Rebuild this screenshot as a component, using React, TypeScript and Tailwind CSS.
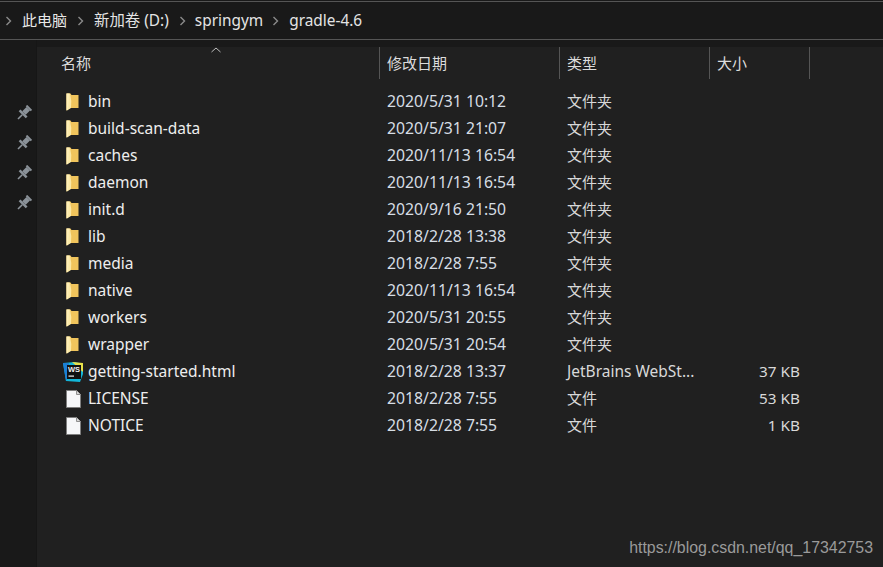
const rows = [
  { name: 'bin', date: '2020/5/31 10:12', type: '文件夹', size: '', icon: 'folder' },
  { name: 'build-scan-data', date: '2020/5/31 21:07', type: '文件夹', size: '', icon: 'folder' },
  { name: 'caches', date: '2020/11/13 16:54', type: '文件夹', size: '', icon: 'folder' },
  { name: 'daemon', date: '2020/11/13 16:54', type: '文件夹', size: '', icon: 'folder' },
  { name: 'init.d', date: '2020/9/16 21:50', type: '文件夹', size: '', icon: 'folder' },
  { name: 'lib', date: '2018/2/28 13:38', type: '文件夹', size: '', icon: 'folder' },
  { name: 'media', date: '2018/2/28 7:55', type: '文件夹', size: '', icon: 'folder' },
  { name: 'native', date: '2020/11/13 16:54', type: '文件夹', size: '', icon: 'folder' },
  { name: 'workers', date: '2020/5/31 20:55', type: '文件夹', size: '', icon: 'folder' },
  { name: 'wrapper', date: '2020/5/31 20:54', type: '文件夹', size: '', icon: 'folder' },
  { name: 'getting-started.html', date: '2018/2/28 13:37', type: 'JetBrains WebSt...', size: '37 KB', icon: 'ws' },
  { name: 'LICENSE', date: '2018/2/28 7:55', type: '文件', size: '53 KB', icon: 'file' },
  { name: 'NOTICE', date: '2018/2/28 7:55', type: '文件', size: '1 KB', icon: 'file' },
];

function Chevron() {
  return (
    <svg width="7" height="10" viewBox="0 0 7 10" className="shrink-0">
      <path d="M1.5 1 L5.5 5 L1.5 9" fill="none" stroke="#8a8a8a" strokeWidth="1.4" />
    </svg>
  );
}

function Pin() {
  return (
    <svg width="16" height="16" viewBox="0 0 16 16" className="ml-[16px]">
      <g transform="rotate(45 8 8)" fill="#8b9299">
        <rect x="4.5" y="0" width="7" height="2" />
        <rect x="5.5" y="2" width="5" height="6" />
        <rect x="3" y="8" width="10" height="2.5" />
        <rect x="7.2" y="10.5" width="1.6" height="6" />
      </g>
    </svg>
  );
}

function FolderIcon() {
  return (
    <svg width="13" height="18" viewBox="0 0 13 18">
      <path d="M0.5 0.5 H4.5 L5.5 2 H12.5 V15 H4 L0.5 17.5 Z" fill="#f0c45c" />
      <path d="M0.5 0.5 H4 Q6 8 5 15 L1 17.5 H0.5 Z" fill="#fce9a6" />
      <path d="M0.5 0.5 H3 L2 17 H0.5 Z" fill="#fff3c4" opacity="0.6" />
    </svg>
  );
}

function FileIcon() {
  return (
    <svg width="15" height="18" viewBox="0 0 15 18">
      <path d="M0.5 0.5 H10.5 L14.5 4.5 V17.5 H0.5 Z" fill="#f6f7f9" stroke="#7f7f7f" />
      <path d="M10.5 0.5 V4.5 H14.5" fill="#d5d5d5" stroke="#8f8f8f" />
    </svg>
  );
}

function WsIcon() {
  return (
    <svg width="20" height="20" viewBox="0 0 20 20" className="-ml-[3px]">
      <path d="M0 1 L12 0 L20 2 L20 12 L17 20 L3 19 Z" fill="#13b6d8" />
      <path d="M9 0 L20 1 L20 10 Z" fill="#e8e24a" />
      <path d="M0 1 L6 1 L5 14 L3 19 Z" fill="#1c7fd6" />
      <rect x="4" y="3" width="14" height="14" fill="#111111" />
      <text x="5" y="10" fontSize="7.5" fontWeight="700" fill="#f2f2f2" fontFamily="'Liberation Sans', sans-serif">WS</text>
      <rect x="5.5" y="13.5" width="5.5" height="1.2" fill="#f2f2f2" />
    </svg>
  );
}

function RowIcon({ kind }: { kind: string }) {
  if (kind === 'folder') return <FolderIcon />;
  if (kind === 'file') return <FileIcon />;
  return <WsIcon />;
}

export default function App() {
  return (
    <div
      className="relative w-[883px] h-[567px] overflow-hidden bg-[#191919] text-[15.5px] text-[#e4e4e4]"
      style={{ fontFamily: "'Noto Sans', 'Noto Sans CJK SC', sans-serif" }}
    >
      {/* address bar */}
      <div className="h-[39px] mt-px border-t border-b border-[#555555] flex items-center pl-[5px] text-[15.4px]">
        <Chevron />
        <span className="ml-[10px] text-[15px] text-[#e8e8e8]">此电脑</span>
        <span className="ml-[10px]"><Chevron /></span>
        <span className="ml-[10px]">新加卷 (D:)</span>
        <span className="ml-[10px]"><Chevron /></span>
        <span className="ml-[9px]">springym</span>
        <span className="ml-[9px]"><Chevron /></span>
        <span className="ml-[10px]">gradle-4.6</span>
      </div>

      <div className="flex h-[527px]">
        {/* quick access pins */}
        <div className="w-[37px] shrink-0 border-r border-[#161616] flex flex-col pt-[65px] gap-[14px]">
          <Pin />
          <Pin />
          <Pin />
          <Pin />
        </div>

        <div className="flex-1 mt-[7px] bg-[#202020]">
          {/* column header */}
          <div className="relative flex h-[32px] items-center text-[15px] text-[#dcdcdc]">
            <div className="w-[343px] h-full flex items-center pl-[24px] border-r border-[#555555]">名称</div>
            <div className="w-[180px] h-full flex items-center pl-[7px] border-r border-[#555555]">修改日期</div>
            <div className="w-[150px] h-full flex items-center pl-[7px] border-r border-[#555555]">类型</div>
            <div className="w-[100px] h-full flex items-center pl-[7px] border-r border-[#555555]">大小</div>
            <svg width="10" height="6" viewBox="0 0 10 6" className="absolute left-[174px] top-0">
              <path d="M0.5 5 L5 1 L9.5 5" fill="none" stroke="#bdbdbd" />
            </svg>
          </div>

          {/* files */}
          <div className="mt-[9px] flex flex-col">
            {rows.map(row => (
              <div key={row.name} className="flex h-[27px] items-center">
                <div className="w-[343px] flex items-center">
                  <div className="w-[51px] flex pl-[29px]">
                    <RowIcon kind={row.icon} />
                  </div>
                  <span className="text-[#eeeeee]">{row.name}</span>
                </div>
                <div className="w-[180px] pl-[7px] text-[15.75px] text-[#d6dde4]">{row.date}</div>
                <div className={row.icon === 'ws' ? 'w-[150px] pl-[7px] whitespace-nowrap text-[#d8d8d8]' : 'w-[150px] pl-[7px] whitespace-nowrap text-[15px] text-[#d8d8d8]'}>{row.type}</div>
                <div className="w-[90px] text-right text-[15.3px] text-[#d8d8d8]">{row.size}</div>
              </div>
            ))}
          </div>
        </div>
      </div>

      <div
        className="absolute right-[10px] top-[536px] text-[15.9px] text-[#9a9a9a] whitespace-nowrap"
        style={{ fontFamily: "'Liberation Sans', sans-serif" }}
      >
        https://blog.csdn.net/qq_17342753
      </div>
    </div>
  );
}
